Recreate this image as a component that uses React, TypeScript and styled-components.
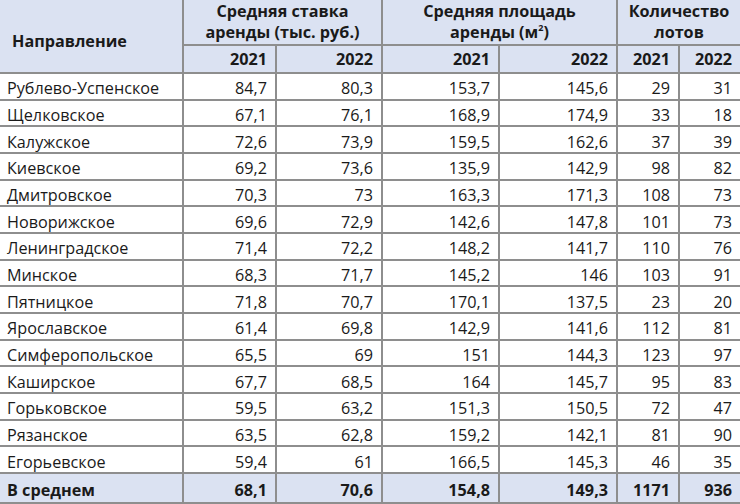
import React from "react";
import styled, { createGlobalStyle } from "styled-components";

const GlobalStyle = createGlobalStyle`
  html, body {
    margin: 0;
    padding: 0;
    background: #ffffff;
  }
  body {
    font-family: "Open Sans", "Noto Sans", sans-serif;
    color: #1a1a1a;
  }
`;

interface Row {
  name: string;
  rent21: string;
  rent22: string;
  area21: string;
  area22: string;
  lots21: string;
  lots22: string;
}

const rows: Row[] = [
  { name: "Рублево-Успенское", rent21: "84,7", rent22: "80,3", area21: "153,7", area22: "145,6", lots21: "29", lots22: "31" },
  { name: "Щелковское", rent21: "67,1", rent22: "76,1", area21: "168,9", area22: "174,9", lots21: "33", lots22: "18" },
  { name: "Калужское", rent21: "72,6", rent22: "73,9", area21: "159,5", area22: "162,6", lots21: "37", lots22: "39" },
  { name: "Киевское", rent21: "69,2", rent22: "73,6", area21: "135,9", area22: "142,9", lots21: "98", lots22: "82" },
  { name: "Дмитровское", rent21: "70,3", rent22: "73", area21: "163,3", area22: "171,3", lots21: "108", lots22: "73" },
  { name: "Новорижское", rent21: "69,6", rent22: "72,9", area21: "142,6", area22: "147,8", lots21: "101", lots22: "73" },
  { name: "Ленинградское", rent21: "71,4", rent22: "72,2", area21: "148,2", area22: "141,7", lots21: "110", lots22: "76" },
  { name: "Минское", rent21: "68,3", rent22: "71,7", area21: "145,2", area22: "146", lots21: "103", lots22: "91" },
  { name: "Пятницкое", rent21: "71,8", rent22: "70,7", area21: "170,1", area22: "137,5", lots21: "23", lots22: "20" },
  { name: "Ярославское", rent21: "61,4", rent22: "69,8", area21: "142,9", area22: "141,6", lots21: "112", lots22: "81" },
  { name: "Симферопольское", rent21: "65,5", rent22: "69", area21: "151", area22: "144,3", lots21: "123", lots22: "97" },
  { name: "Каширское", rent21: "67,7", rent22: "68,5", area21: "164", area22: "145,7", lots21: "95", lots22: "83" },
  { name: "Горьковское", rent21: "59,5", rent22: "63,2", area21: "151,3", area22: "150,5", lots21: "72", lots22: "47" },
  { name: "Рязанское", rent21: "63,5", rent22: "62,8", area21: "159,2", area22: "142,1", lots21: "81", lots22: "90" },
  { name: "Егорьевское", rent21: "59,4", rent22: "61", area21: "166,5", area22: "145,3", lots21: "46", lots22: "35" },
];

const total: Row = {
  name: "В среднем",
  rent21: "68,1",
  rent22: "70,6",
  area21: "154,8",
  area22: "149,3",
  lots21: "1171",
  lots22: "936",
};

const colWidths = [183, 93, 106, 117, 118, 62, 61];

const Table = styled.table`
  width: 740px;
  border-collapse: collapse;
  table-layout: fixed;
  font-size: 16.2px;
`;

const HeadCell = styled.th<{ $align?: "left" | "center" | "right" }>`
  background: #dbe2f2;
  border: 2px solid #8e8e8e;
  border-top: none;
  font-weight: 700;
  text-align: ${({ $align }) => $align || "center"};
  line-height: 21px;
  padding: 0 8px;
  white-space: nowrap;

  &:first-child {
    border-left: none;
  }
  &:last-child {
    border-right: none;
  }
`;

const GroupCell = styled(HeadCell)`
  height: 44px;
  padding: 0 4px;
  vertical-align: middle;
`;

const NameHead = styled(HeadCell)`
  padding: 10px 0 0 12px;
  text-align: left;
`;

const YearCell = styled(HeadCell)`
  height: 26px;
  text-align: right;
`;

const BodyRow = styled.tr<{ $total?: boolean }>`
  background: ${({ $total }) => ($total ? "#dbe2f2" : "#ffffff")};
  font-weight: ${({ $total }) => ($total ? 700 : 400)};
  height: ${({ $total }) => ($total ? "30px" : "26.67px")};
`;

const Cell = styled.td<{ $name?: boolean }>`
  border: 2px solid #8e8e8e;
  padding: ${({ $name }) => ($name ? "4px 0 0 7px" : "4px 8px 0 0")};
  text-align: ${({ $name }) => ($name ? "left" : "right")};
  white-space: nowrap;
  line-height: 20px;

  &:first-child {
    border-left: none;
  }
  &:last-child {
    border-right: none;
  }
`;

const Sup = styled.sup`
  font-size: 9px;
  vertical-align: 7px;
  line-height: 0;
`;

const DataRow: React.FC<{ row: Row; total?: boolean }> = ({ row, total }) => (
  <BodyRow $total={total}>
    <Cell $name>{row.name}</Cell>
    <Cell>{row.rent21}</Cell>
    <Cell>{row.rent22}</Cell>
    <Cell>{row.area21}</Cell>
    <Cell>{row.area22}</Cell>
    <Cell>{row.lots21}</Cell>
    <Cell>{row.lots22}</Cell>
  </BodyRow>
);

export default function App() {
  return (
    <>
      <GlobalStyle />
      <Table>
        <colgroup>
          {colWidths.map((w, i) => (
            <col key={i} style={{ width: w }} />
          ))}
        </colgroup>
        <thead>
          <tr>
            <NameHead rowSpan={2}>Направление</NameHead>
            <GroupCell colSpan={2}>
              Средняя ставка
              <br />
              аренды (тыс. руб.)
            </GroupCell>
            <GroupCell colSpan={2}>
              Средняя площадь
              <br />
              аренды (м<Sup>2</Sup>)
            </GroupCell>
            <GroupCell colSpan={2}>
              Количество
              <br />
              лотов
            </GroupCell>
          </tr>
          <tr>
            <YearCell>2021</YearCell>
            <YearCell>2022</YearCell>
            <YearCell>2021</YearCell>
            <YearCell>2022</YearCell>
            <YearCell>2021</YearCell>
            <YearCell>2022</YearCell>
          </tr>
        </thead>
        <tbody>
          {rows.map((r) => (
            <DataRow key={r.name} row={r} />
          ))}
          <DataRow row={total} total />
        </tbody>
      </Table>
    </>
  );
}
